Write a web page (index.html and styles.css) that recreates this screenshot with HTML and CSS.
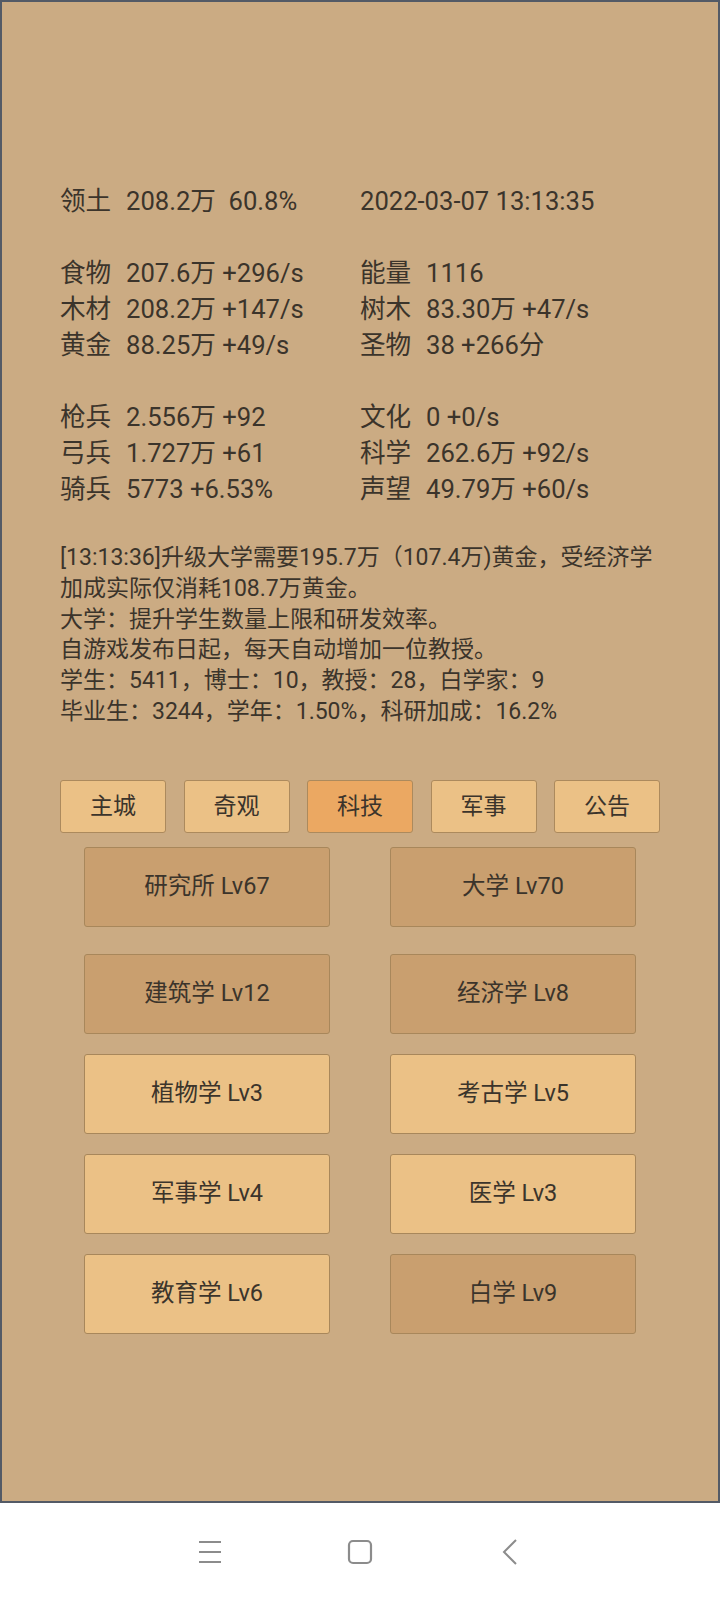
FILE: index.html
```html
<!DOCTYPE html>
<html lang="zh-CN">
<head>
    <meta charset="UTF-8">
    <meta name="viewport" content="width=device-width, initial-scale=1.0">
    <link rel="stylesheet" href="styles.css">
    <title>科技</title>
</head>
<body>
    <div class="screen">
        <!-- resources -->
        <div class="stats">
            <div class="stat-group">
                <div class="stat"><span class="stat-name">领土</span>208.2万&nbsp;&nbsp;60.8%</div>
                <div class="stat"><span class="stat-name clock">2022-03-07 13:13:35</span></div>
            </div>
            <div class="stat-group">
                <div class="stat"><span class="stat-name">食物</span>207.6万 +296/s</div>
                <div class="stat"><span class="stat-name">能量</span>1116</div>
                <div class="stat"><span class="stat-name">木材</span>208.2万 +147/s</div>
                <div class="stat"><span class="stat-name">树木</span>83.30万 +47/s</div>
                <div class="stat"><span class="stat-name">黄金</span>88.25万 +49/s</div>
                <div class="stat"><span class="stat-name">圣物</span>38 +266分</div>
            </div>
            <div class="stat-group">
                <div class="stat"><span class="stat-name">枪兵</span>2.556万 +92</div>
                <div class="stat"><span class="stat-name">文化</span>0 +0/s</div>
                <div class="stat"><span class="stat-name">弓兵</span>1.727万 +61</div>
                <div class="stat"><span class="stat-name">科学</span>262.6万 +92/s</div>
                <div class="stat"><span class="stat-name">骑兵</span>5773 +6.53%</div>
                <div class="stat"><span class="stat-name">声望</span>49.79万 +60/s</div>
            </div>
        </div>

        <div class="log">
            [13:13:36]升级大学需要195.7万（107.4万)黄金，受经济学<br>
            加成实际仅消耗108.7万黄金。<br>
            大学：提升学生数量上限和研发效率。<br>
            自游戏发布日起，每天自动增加一位教授。<br>
            学生：5411，博士：10，教授：28，白学家：9<br>
            毕业生：3244，学年：1.50%，科研加成：16.2%
        </div>

        <div class="tabs">
            <div class="tab">主城</div>
            <div class="tab">奇观</div>
            <div class="tab active">科技</div>
            <div class="tab">军事</div>
            <div class="tab">公告</div>
        </div>

        <div class="buildings top">
            <div class="building done">研究所 Lv67</div>
            <div class="building done">大学 Lv70</div>
        </div>
        <div class="buildings">
            <div class="building done">建筑学 Lv12</div>
            <div class="building done">经济学 Lv8</div>
            <div class="building">植物学 Lv3</div>
            <div class="building">考古学 Lv5</div>
            <div class="building">军事学 Lv4</div>
            <div class="building">医学 Lv3</div>
            <div class="building">教育学 Lv6</div>
            <div class="building done">白学 Lv9</div>
        </div>
    </div>

    <div class="navbar">
        <div class="nav-btn">
            <svg width="24" height="24" viewBox="0 0 24 24">
                <path d="M1 2h22M1 12h22M1 22h22" stroke="#8c8c8c" stroke-width="2" fill="none"/>
            </svg>
        </div>
        <div class="nav-btn">
            <svg width="26" height="26" viewBox="0 0 26 26">
                <rect x="2" y="2" width="22" height="22" rx="4" stroke="#8c8c8c" stroke-width="2.2" fill="none"/>
            </svg>
        </div>
        <div class="nav-btn">
            <svg width="16" height="26" viewBox="0 0 16 26">
                <path d="M14 1L2 13l12 12" stroke="#8c8c8c" stroke-width="2" fill="none"/>
            </svg>
        </div>
    </div>
</body>
</html>
```

FILE: styles.css
```css
*{
    box-sizing: border-box;
}
body{
    margin: 0;
    background-color: #fff;
    font-family: Roboto, "Noto Sans CJK SC", sans-serif;
    color: #3b342b;
}
.screen{
    height: 1503px;
    padding-top: 181px;
    background-color: #cbab83;
    border: 2px solid #535a66;
}

/* stats table */
.stats{
    width: 600px;
    margin: 0 auto;
    font-size: 25.6px;
    line-height: 36px;
}
.stat-group{
    display: grid;
    grid-template-columns: 300px 300px;
    margin-bottom: 36px;
}
.stat{
    white-space: nowrap;
}
.stat-name{
    display: inline-block;
    width: 50px;
    margin-right: 16px;
}
.stat-name.clock{
    width: auto;
}

.log{
    width: 600px;
    margin: 4px auto 0;
    font-size: 23px;
    line-height: 30.8px;
    white-space: nowrap;
}

/* tabs */
.tabs{
    display: flex;
    justify-content: space-between;
    width: 600px;
    margin: 52px auto 0;
}
.tab{
    width: 106px;
    height: 53px;
    line-height: 51px;
    text-align: center;
    font-size: 23px;
    background-color: #ebc186;
    border: 1px solid #ac8a5d;
    border-radius: 3px;
}
.tab.active{
    background-color: #eba862;
}

/* buildings */
.buildings{
    display: grid;
    grid-template-columns: 246px 246px;
    column-gap: 60px;
    row-gap: 20px;
    width: 552px;
    margin: 0 auto;
}
.buildings.top{
    margin-top: 14px;
    margin-bottom: 27px;
}
.building{
    height: 80px;
    line-height: 77px;
    text-align: center;
    font-size: 23.5px;
    background-color: #ebc186;
    border: 1.5px solid #a8875b;
    border-radius: 3px;
}
.building.done{
    background-color: #c99f6f;
}

.navbar{
    display: flex;
    justify-content: center;
    align-items: center;
    height: 97px;
}
.nav-btn{
    width: 150px;
    display: flex;
    justify-content: center;
}
.nav-btn svg{
    display: block;
}
```
